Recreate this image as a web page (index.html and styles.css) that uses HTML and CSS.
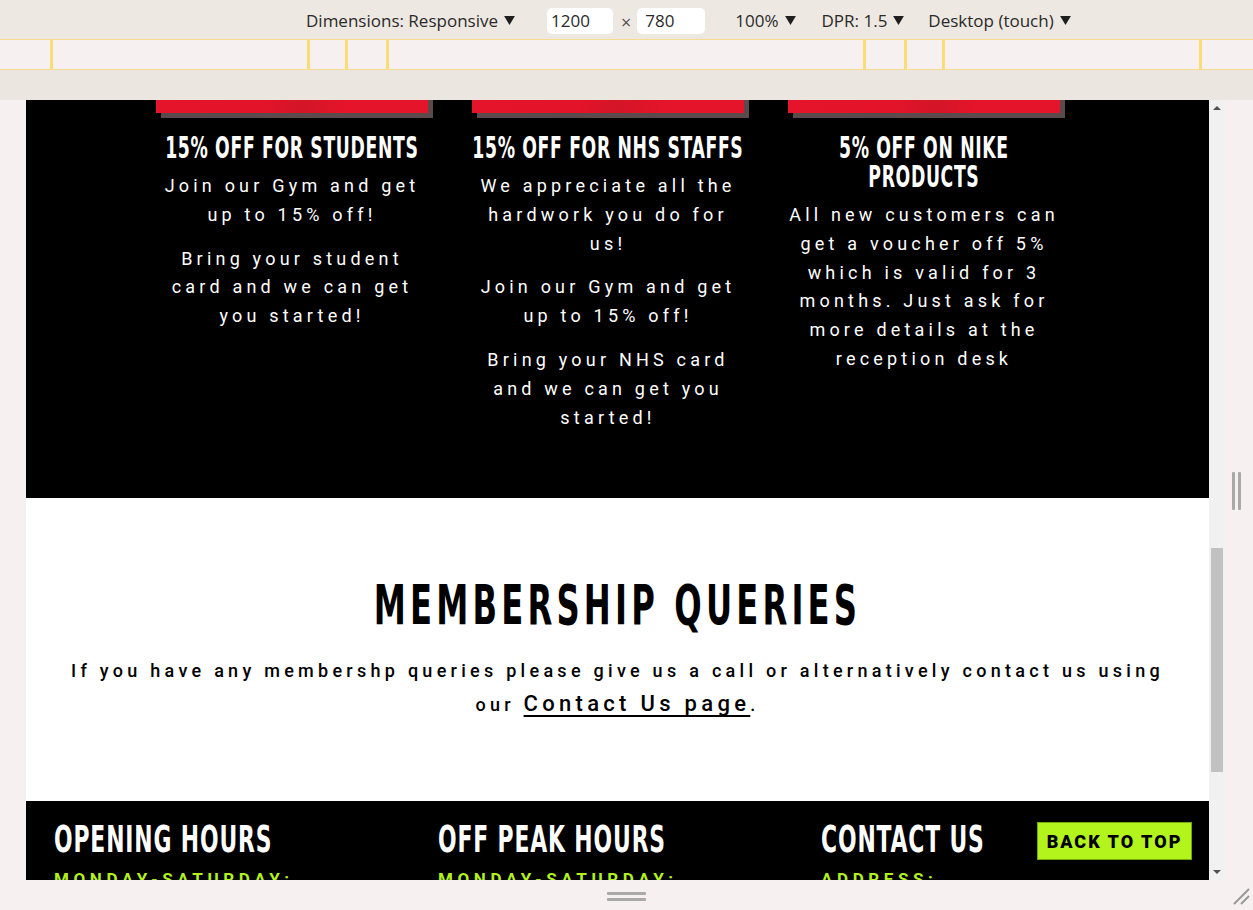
FILE: index.html
```html
<!DOCTYPE html>
<html lang="en">
<head>
<meta charset="utf-8">
<title>Responsive preview</title>
<link rel="stylesheet" href="styles.css">
</head>
<body>
<div class="app">
  <div class="toolbar">
    <span class="tb-item tb-dim">Dimensions: Responsive <svg class="tri" viewBox="0 0 12 10"><path d="M0 0H12L6 10Z"/></svg></span>
    <span class="tb-input tb-w">1200</span>
    <span class="tb-x">×</span>
    <span class="tb-input tb-h">780</span>
    <span class="tb-item tb-zoom">100% <svg class="tri" viewBox="0 0 12 10"><path d="M0 0H12L6 10Z"/></svg></span>
    <span class="tb-item tb-dpr">DPR: 1.5 <svg class="tri" viewBox="0 0 12 10"><path d="M0 0H12L6 10Z"/></svg></span>
    <span class="tb-item tb-dev">Desktop (touch) <svg class="tri" viewBox="0 0 12 10"><path d="M0 0H12L6 10Z"/></svg></span>
  </div>
  <div class="ruler">
    <i class="mark" style="left:50px"></i>
    <i class="mark" style="left:307px"></i>
    <i class="mark" style="left:345px"></i>
    <i class="mark" style="left:386px"></i>
    <i class="mark" style="left:863px"></i>
    <i class="mark" style="left:904px"></i>
    <i class="mark" style="left:942px"></i>
    <i class="mark" style="left:1199px"></i>
  </div>
  <div class="stage-top"></div>
  <div class="stage">
    <div class="gutter-left"></div>
    <div class="viewport">
      <div class="page">
        <section class="offers">
          <div class="card">
            <div class="card-bar"></div>
            <h3 class="card-title"><span class="narrow">15% OFF FOR STUDENTS</span></h3>
            <p class="card-text">Join our Gym and get up to 15% off!</p>
            <p class="card-text">Bring your student card and we can get you started!</p>
          </div>
          <div class="card">
            <div class="card-bar"></div>
            <h3 class="card-title"><span class="narrow">15% OFF FOR NHS STAFFS</span></h3>
            <p class="card-text">We appreciate all the hardwork you do for us!</p>
            <p class="card-text">Join our Gym and get up to 15% off!</p>
            <p class="card-text">Bring your NHS card and we can get you started!</p>
          </div>
          <div class="card">
            <div class="card-bar"></div>
            <h3 class="card-title"><span class="narrow">5% OFF ON NIKE PRODUCTS</span></h3>
            <p class="card-text">All new customers can get a voucher off 5% which is valid for 3 months. Just ask for more details at the reception desk</p>
          </div>
        </section>
        <section class="queries">
          <h2 class="queries-title"><span class="narrow">MEMBERSHIP QUERIES</span></h2>
          <p class="queries-text">If you have any membershp queries please give us a call or alternatively contact us using our <a class="queries-link" href="#">Contact Us page</a>.</p>
        </section>
        <footer class="footer">
          <div class="f-col">
            <h2 class="f-title"><span class="narrow">OPENING HOURS</span></h2>
            <p class="f-label">MONDAY-SATURDAY:</p>
          </div>
          <div class="f-col">
            <h2 class="f-title"><span class="narrow">OFF PEAK HOURS</span></h2>
            <p class="f-label">MONDAY-SATURDAY:</p>
          </div>
          <div class="f-col">
            <h2 class="f-title"><span class="narrow">CONTACT US</span></h2>
            <p class="f-label">ADDRESS:</p>
          </div>
          <a class="to-top" href="#">BACK TO TOP</a>
        </footer>
      </div>
    </div>
    <div class="scrollbar">
      <svg class="sb-arrow" viewBox="0 0 8 4"><path d="M0 4L4 0L8 4Z"/></svg>
      <div class="sb-track"><div class="sb-thumb"></div></div>
      <svg class="sb-arrow" viewBox="0 0 8 4"><path d="M0 0L4 4L8 0Z"/></svg>
    </div>
    <div class="gutter-right"><div class="v-handle"><i></i><i></i></div></div>
  </div>
  <div class="bottombar">
    <div class="h-handle"><i></i><i></i></div>
    <svg class="corner" viewBox="0 0 20 20"><path d="M18 3L3 18M18 10L10 18" stroke="#9a9a9a" stroke-width="2" fill="none"/></svg>
  </div>
</div>
</body>
</html>
```

FILE: styles.css
```css
* { box-sizing: border-box; }
html, body { margin: 0; padding: 0; }
body {
  width: 1253px;
  height: 910px;
  overflow: hidden;
  background: #f6f1f0;
  font-family: "Open Sans", "Noto Sans", sans-serif;
}
.app { display: flex; flex-direction: column; width: 1253px; height: 910px; }

/* toolbar */
.toolbar {
  height: 39px;
  background: #eee8e2;
  display: flex;
  align-items: center;
  padding: 2px 0 0 306px;
  font-size: 17px;
  color: #2a2a2a;
}
.tb-item { display: inline-flex; align-items: center; white-space: nowrap; }
.tri { width: 11px; height: 9px; fill: #1f1f1f; margin-left: 6px; }
.tb-dim { margin-right: 32px; }
.tb-input {
  background: #fff;
  border-radius: 5px;
  height: 26px;
  width: 66px;
  padding-left: 4px;
  display: flex;
  align-items: center;
}
.tb-h { width: 68px; padding-left: 8px; }
.tb-x { margin: 2px 6px 0 8px; color: #555; font-size: 18px; }
.tb-zoom { margin-left: 30px; }
.tb-dpr { margin-left: 26px; }
.tb-dev { margin-left: 24px; }

/* ruler */
.ruler {
  position: relative;
  height: 31px;
  background: #f6f1f0;
  border-top: 1px solid #f5dc8e;
  border-bottom: 1px solid #f5dc8e;
}
.mark {
  position: absolute;
  top: 0;
  bottom: 0;
  width: 3px;
  background: #fbdd78;
}

.stage-top { height: 30px; background: #ece6e0; }
.stage { display: flex; height: 780px; }
.gutter-left { width: 26px; background: #f6f1f0; }
.viewport { width: 1183px; height: 780px; overflow: hidden; background: #fff; }
.page { margin-top: -27px; }

/* condensed display headings: DejaVu Sans Condensed narrowed */
.narrow {
  display: block;
  width: 156.25%;
  transform: scaleX(0.64);
  transform-origin: 0 0;
  font-family: "DejaVu Sans Condensed", "DejaVu Sans", sans-serif;
  font-weight: 700;
}

/* offers */
.offers {
  background: #000;
  display: flex;
  padding: 0 0 73px 130px;
  gap: 44px;
}
.card { width: 272px; text-align: center; color: #fff; }
.card-bar {
  height: 40px;
  background: linear-gradient(100deg, #e5142a 0%, #e3132a 40%, #d31527 55%, #e5142a 70%, #e5142a 100%);
  box-shadow: 5px 5px 0 #5b4a4b;
}
.card-title {
  margin: 20px 0 0;
  font-size: 30px;
  line-height: 29px;
  letter-spacing: 1px;
}
.card-title .narrow { width: 434px; margin-left: -3px; }
.card-text {
  margin: 10px 0 -7px;
  font-family: Roboto, "Open Sans", sans-serif;
  font-size: 18px;
  line-height: 28.8px;
  letter-spacing: 4.2px;
}
.card-text + .card-text { margin-top: 22px; }

/* queries */
.queries { padding: 77px 0 80px; text-align: center; color: #000; }
.queries-title {
  margin: 0;
  font-size: 56px;
  line-height: 60px;
  letter-spacing: 6.5px;
}
.queries-text {
  margin: 19px 0 0;
  padding: 0 30px;
  font-family: Roboto, "Open Sans", sans-serif;
  font-weight: 500;
  font-size: 18px;
  line-height: 33px;
  letter-spacing: 4.27px;
}
.queries-link {
  color: #000;
  font-size: 22px;
  letter-spacing: 4.3px;
  text-decoration: underline;
  text-decoration-thickness: 2px;
  text-underline-offset: 4px;
}

/* footer */
.footer {
  position: relative;
  background: #000;
  display: grid;
  grid-template-columns: 384px 383px 300px;
  padding: 16px 0 0 28px;
  height: 120px;
}
.f-title {
  margin: 0;
  font-size: 38px;
  line-height: 44px;
  letter-spacing: 1.35px;
  color: #fff;
}
.f-label {
  margin: 8px 0 0;
  font-family: Roboto, "Open Sans", sans-serif;
  font-weight: 700;
  font-size: 17px;
  letter-spacing: 4.6px;
  color: #b2f21b;
}
.to-top {
  position: absolute;
  top: 21px;
  right: 17px;
  width: 155px;
  height: 38px;
  background: #b3f41d;
  border: 1px solid #74a80f;
  color: #000;
  display: flex;
  align-items: center;
  justify-content: center;
  font-family: Roboto, "Open Sans", sans-serif;
  font-weight: 900;
  font-size: 18px;
  letter-spacing: 2px;
  text-decoration: none;
}

/* scrollbar */
.scrollbar {
  width: 16px;
  background: #f1f1f1;
  display: flex;
  flex-direction: column;
  align-items: center;
}
.sb-arrow { width: 8px; height: 4px; fill: #505050; margin: 6px 0; }
.sb-track { flex: 1; width: 100%; padding: 0 2px; }
.sb-thumb { margin-top: 432px; height: 224px; background: #c1c1c1; }

.gutter-right {
  flex: 1;
  background: #f6f1f0;
  display: flex;
  align-items: center;
  justify-content: center;
  padding-top: 2px;
}
.v-handle { display: flex; gap: 3px; margin-left: -6px; }
.v-handle i { display: block; width: 3px; height: 38px; background: #a9a9a9; border-radius: 1px; }

/* bottom bar */
.bottombar {
  position: relative;
  flex: 1;
  background: #f6f1f0;
  display: flex;
  justify-content: center;
  padding-top: 12px;
}
.h-handle { display: flex; flex-direction: column; gap: 3px; }
.h-handle i { display: block; width: 39px; height: 3px; background: #a9a9a9; border-radius: 1px; }
.corner { position: absolute; right: 2px; bottom: 4px; width: 20px; height: 20px; }
```
